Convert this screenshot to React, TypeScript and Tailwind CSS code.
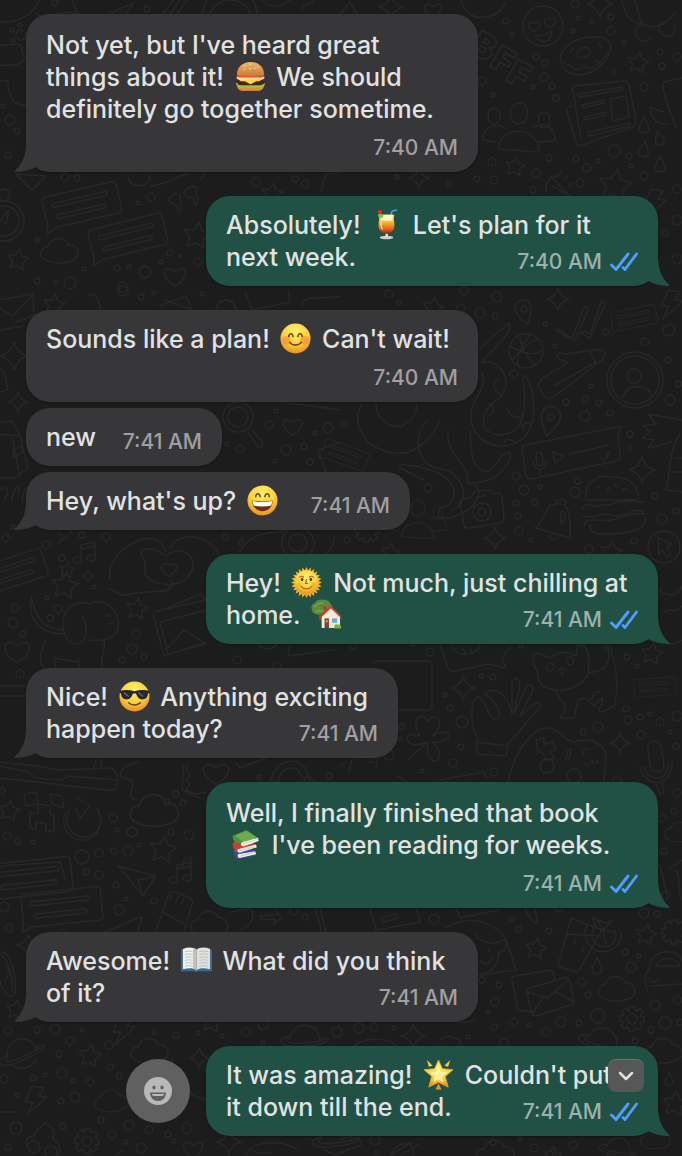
import type { ReactNode } from "react";

/* ---------- wallpaper ---------- */

const CIRCLES: [number, number, number][] = [
  [55, 3, 3], [147, 9, 3], [10, 120, 5], [17, 131, 3], [3, 106, 2], [8, 155, 3], [65, 177, 4], [77, 178, 3], [138, 203, 2], [151, 197, 4],
  [37, 240, 2], [170, 253, 3], [180, 256, 1], [161, 262, 2], [198, 262, 4], [145, 272, 6], [117, 268, 3], [129, 267, 2], [84, 269, 2],
  [37, 281, 3], [56, 282, 2], [70, 283, 6], [123, 287, 5], [256, 182, 4], [295, 179, 3], [305, 184, 4], [12, 30, 2], [21, 35, 5], [13, 40, 2], [20, 25, 2],
  [506, 21, 3], [512, 35, 2], [575, 4, 4], [578, 18, 2], [592, 22, 2], [611, 17, 3], [611, 31, 4], [573, 31, 2], [536, 57, 3], [545, 63, 3],
  [544, 77, 4], [533, 87, 2], [552, 86, 3], [556, 98, 3], [482, 81, 4], [493, 95, 2], [624, 43, 2], [614, 72, 2], [660, 52, 3], [662, 66, 3],
  [677, 57, 4], [644, 87, 4], [614, 151, 6], [629, 156, 3], [631, 166, 2], [644, 176, 4], [549, 158, 3], [492, 162, 4], [576, 159, 3],
  [587, 168, 4], [598, 161, 2], [536, 173, 4], [533, 190, 3], [580, 183, 4], [477, 179, 3], [494, 180, 4], [449, 184, 2], [397, 177, 2],
  [677, 189, 4], [677, 220, 5], [665, 233, 3], [677, 259, 5], [141, 297, 3], [154, 293, 2], [202, 294, 2], [123, 291, 5],
  [389, 294, 4], [399, 303, 2], [480, 313, 5], [495, 316, 3], [497, 297, 5], [461, 308, 4], [464, 291, 4], [545, 324, 2], [555, 346, 2], [606, 332, 3],
  [645, 342, 4], [669, 330, 6], [514, 374, 4], [591, 386, 2], [566, 402, 3], [585, 399, 3], [599, 403, 3], [610, 413, 3], [585, 416, 5], [668, 360, 3],
  [670, 400, 5], [679, 384, 3], [630, 434, 3], [630, 448, 2], [516, 476, 4], [524, 490, 5], [540, 487, 2], [575, 492, 5], [578, 481, 3], [428, 488, 4],
  [655, 496, 3], [662, 519, 5], [676, 511, 3], [516, 503, 3], [535, 502, 3], [518, 516, 3], [519, 531, 4], [531, 540, 2], [634, 541, 3], [589, 549, 4],
  [347, 540, 3], [344, 424, 2], [276, 411, 2], [269, 425, 4], [328, 428, 5], [315, 433, 2], [286, 450, 5], [304, 446, 3], [227, 444, 2],
  [240, 449, 4], [275, 461, 2], [310, 462, 3], [6, 538, 4], [13, 527, 2], [46, 545, 4], [62, 558, 3], [82, 535, 3], [106, 537, 4], [225, 537, 3],
  [88, 576, 4], [15, 608, 4], [13, 623, 5], [23, 634, 3], [20, 674, 4], [94, 587, 2], [47, 598, 2], [58, 609, 4], [50, 618, 3], [136, 634, 4],
  [132, 649, 5], [144, 657, 3], [122, 660, 3], [237, 660, 4], [277, 666, 4], [353, 646, 3], [413, 644, 2], [430, 652, 4], [521, 646, 2], [481, 676, 2], [493, 677, 3],
  [445, 695, 2], [450, 708, 3], [462, 722, 6], [402, 727, 3], [400, 739, 2], [461, 747, 3], [453, 763, 4], [389, 755, 5], [422, 771, 2], [494, 772, 4],
  [627, 657, 3], [637, 666, 2], [626, 709, 3], [628, 720, 4], [640, 717, 3], [650, 714, 2], [660, 722, 4], [677, 716, 5], [598, 727, 5], [583, 732, 3],
  [641, 735, 4], [670, 732, 2], [676, 746, 3], [617, 780, 4], [677, 793, 4], [674, 811, 3], [662, 818, 4], [664, 851, 3], [2, 791, 3], [7, 836, 4],
  [18, 841, 3], [33, 842, 2], [113, 818, 4], [117, 830, 2], [132, 832, 5], [82, 857, 7], [99, 853, 4], [114, 851, 3], [128, 851, 5],
  [139, 845, 2], [171, 832, 3], [189, 835, 5], [167, 802, 3], [176, 794, 3], [183, 803, 3], [259, 777, 2], [307, 780, 3], [329, 776, 3],
  [99, 875, 4], [86, 872, 3], [116, 885, 3], [126, 899, 2], [154, 901, 3], [119, 910, 5], [4, 907, 5], [9, 928, 4], [62, 933, 4], [294, 911, 4], [305, 917, 3],
  [434, 919, 5], [512, 919, 2], [519, 929, 3], [549, 931, 3], [559, 908, 4], [644, 913, 5], [657, 914, 3], [666, 895, 4], [482, 980, 3], [499, 985, 3], [495, 1002, 4],
  [488, 1012, 2], [494, 1027, 3], [514, 1022, 4], [529, 1025, 2], [546, 1032, 4], [561, 1022, 5], [579, 1023, 3], [598, 1016, 7], [582, 982, 4], [588, 995, 3],
  [625, 952, 3], [639, 956, 2], [631, 967, 5], [655, 1005, 5], [665, 1023, 6], [651, 1030, 3], [678, 1000, 4], [680, 1022, 3], [635, 1041, 3],
  [8, 1031, 4], [37, 1030, 3], [55, 1029, 5], [82, 1030, 2], [70, 1041, 4], [109, 1045, 4], [59, 1054, 3], [4, 1079, 4], [33, 1078, 3], [45, 1075, 2], [62, 1073, 5],
  [17, 1095, 2], [75, 1097, 5], [61, 1101, 3], [73, 1081, 2], [90, 1082, 4], [110, 1067, 3], [119, 1076, 3], [16, 1128, 6], [8, 1147, 3], [63, 1126, 3],
  [101, 1120, 3], [112, 1135, 4], [129, 1125, 5], [126, 1142, 2], [141, 1148, 5], [149, 1130, 4], [168, 1134, 3], [174, 1141, 2], [187, 1128, 5],
  [154, 1032, 2], [176, 1035, 3], [198, 1033, 2], [222, 1036, 2], [246, 1032, 4], [263, 1025, 5], [263, 1043, 2], [337, 1032, 5], [359, 1028, 5], [374, 1027, 4], [394, 1028, 2],
  [468, 1037, 2], [504, 1043, 4], [375, 1140, 5], [493, 1142, 3], [520, 1139, 2], [534, 1148, 4], [550, 1154, 3], [573, 1145, 4], [377, 1152, 2],
];

const STARS: [number, number, number][] = [
  [18, 260, 11], [197, 236, 14], [272, 194, 11], [638, 63, 11], [515, 167, 10], [615, 186, 17], [54, 305, 11], [433, 308, 11], [65, 586, 14], [137, 609, 11],
  [9, 811, 11], [163, 850, 14], [652, 654, 11], [611, 552, 11], [390, 553, 10], [90, 1056, 12], [212, 1022, 11], [536, 949, 11], [646, 935, 11],
  [16, 1010, 10], [675, 1104, 13], [552, 1156, 10], [67, 570, 8],
];

const SPARKLES: [number, number, number][] = [
  [391, 7, 12], [600, 4, 13], [419, 178, 10], [14, 356, 14], [18, 402, 10], [558, 299, 11], [642, 470, 13], [495, 538, 11], [463, 688, 12],
  [620, 743, 10], [413, 1036, 12], [199, 1058, 10], [229, 1142, 12], [28, 945, 11], [138, 1085, 8],
];

const HEARTS: [number, number, number][] = [
  [175, 276, 11], [433, 10, 9], [534, 26, 6], [550, 22, 6], [293, 426, 10], [17, 651, 13], [216, 773, 13], [169, 569, 8], [193, 1149, 10],
];

const LETTERS: [string, number, number][] = [["B", 484, 46], ["F", 503, 60], ["F", 519, 74]];

function starPath(cx: number, cy: number, r: number) {
  const points: string[] = [];
  for (let i = 0; i < 10; i++) {
    const radius = i % 2 === 0 ? r : r * 0.5;
    const angle = (Math.PI / 5) * i - Math.PI / 2 + 0.15;
    points.push(`${(cx + radius * Math.cos(angle)).toFixed(1)} ${(cy + radius * Math.sin(angle)).toFixed(1)}`);
  }
  return `M${points.join("L")}Z`;
}

function sparklePath(x: number, y: number, r: number) {
  const k = r * 0.2;
  return `M${x} ${y - r}Q${x + k} ${y - k} ${x + r} ${y}Q${x + k} ${y + k} ${x} ${y + r}Q${x - k} ${y + k} ${x - r} ${y}Q${x - k} ${y - k} ${x} ${y - r}Z`;
}

function heartPath(x: number, y: number, s: number) {
  return `M${x} ${y + s * 0.9}C${x - s * 1.6} ${y} ${x - s * 0.9} ${y - s * 1.2} ${x} ${y - s * 0.4}C${x + s * 0.9} ${y - s * 1.2} ${x + s * 1.6} ${y} ${x} ${y + s * 0.9}Z`;
}

const cloud = "M-14 8C-22 6-20-6-12-5C-10-16 6-16 8-7C18-9 22 5 13 8C6 12-8 12-14 8Z";
const gear = "M-3-12H3L4-8L8-10L11-6L8-3L12-2V3L8 4L10 8L6 11L3 8L2 12H-3L-4 8L-8 10L-11 6L-8 3L-12 2V-3L-8-4L-10-8L-6-11L-3-8Z";
const drop = "M0-8C2-3 5 0 5 4C5 9-5 9-5 4C-5 0-2-3 0-8Z";
const bolt = "M-4-14L8-12L3-4L11-3L-9 15L-3 2L-11 2Z";
const pin = "M0 13C-4 6-8 2-8-4C-8-15 8-15 8-4C8 2 4 6 0 13Z";
const note = "M-6 8V-7L8-10V5M-6-3L8-6M-6 8A4 3 0 1 1-9 5M8 5A4 3 0 1 1 5 3";
const people = "M-20 22C-20-2 20-2 20 25ZM-23 15L-36 13C-36-2-22-4-14 1M20 15L36 14C36-2 24-5 16 0M0-24C12-24 11-3 0-3C-11-3-12-24 0-24ZM-25-19C-16-19-17-3-25-3C-33-3-33-19-25-19ZM25-15C33-15 33 1 25 1C17 1 17-15 25-15Z";
const bubble = "M-38-12Q-38-16-34-16H34Q38-16 38-12V12Q38 16 34 16H-30L-40 20L-38 10ZM-28-8H26Q29-6 26-4H-28Q-31-6-28-8ZM-26 4H22Q25 6 22 8H-26Q-29 6-26 4Z";
const planet = "M-15 0A15 15 0 0 1 15 0M-12 8A15 15 0 0 0 13 7M-15-2C-32 4-22 12 0 6C24 2 30-8 15-3M-16 1C-22 6-8 5 0 3C14 0 22-4 15-1";

const PLACED: { d: string; x: number; y: number; rot?: number; s?: number }[] = [
  { d: bubble, x: 82, y: 205, rot: -13 }, { d: bubble, x: 128, y: 237, rot: -14 }, { d: bubble, x: 634, y: 318, rot: -11, s: 0.6 },
  { d: bubble, x: 12, y: 572, rot: -18, s: 0.9 }, { d: bubble, x: 655, y: 687, rot: -4, s: 0.55 }, { d: bubble, x: 30, y: 878, rot: -6, s: 1.1 },
  { d: bubble, x: 62, y: 907, rot: -6, s: 1.05 }, { d: bubble, x: 345, y: 455, rot: 20, s: 0.6 },
  { d: cloud, x: 60, y: 252 }, { d: cloud, x: 210, y: 925 }, { d: cloud, x: 150, y: 1052 }, { d: cloud, x: 112, y: 1102, s: 0.9 }, { d: cloud, x: 617, y: 990 },
  { d: cloud, x: 664, y: 1052 }, { d: cloud, x: 496, y: 1154 }, { d: cloud, x: 656, y: 1140, s: 0.8 }, { d: cloud, x: 155, y: 812, s: 1.3 }, { d: cloud, x: 680, y: 833, s: 0.8 },
  { d: gear, x: 87, y: 1141 }, { d: gear, x: 632, y: 1019 }, { d: gear, x: 674, y: 932 }, { d: gear, x: 367, y: 530 },
  { d: drop, x: 644, y: 125 }, { d: drop, x: 659, y: 138, rot: -15, s: 0.9 }, { d: drop, x: 644, y: 149, rot: 10 }, { d: drop, x: 660, y: 164 }, { d: drop, x: 597, y: 966 }, { d: drop, x: 669, y: 1079, s: 0.8 },
  { d: bolt, x: 655, y: 203 }, { d: bolt, x: 672, y: 304 }, { d: bolt, x: 124, y: 1030 }, { d: bolt, x: 36, y: 1100 }, { d: bolt, x: 65, y: 533, s: 0.7 },
  { d: pin, x: 524, y: 312, rot: -15 }, { d: pin, x: 550, y: 421, rot: 12, s: 1.2 },
  { d: note, x: 87, y: 552 }, { d: note, x: 183, y: 872 }, { d: note, x: 187, y: 862, s: 0.6 },
  { d: people, x: 519, y: 127 }, { d: people, x: 418, y: 519, s: 0.8 },
  { d: planet, x: 22, y: 1054, rot: -12 }, { d: planet, x: 305, y: 1040, rot: 8 }, { d: planet, x: 602, y: 1043, rot: 25 }, { d: planet, x: 618, y: 1150, rot: 20, s: 0.8 }, { d: planet, x: 336, y: 1140, rot: 5 },
];

const DRAWINGS = [
  "M0 22C20 23 34 14 39 0M36 14C46 22 60 8 78 14L72 0M0 45C10 46 14 42 20 45C26 50 18 52 24 55C26 64 16 66 0 65M0 81H8C8 98 14 106 26 105",
  "M110 13L134 3L126 14M163 14L173 0M170 14L180 0M177 14L187 0M203 14A27 27 0 0 1 257 14M210 14A22 22 0 0 1 251 14M262 0C268 8 280 8 290 0M302 10C304 2 310 6 314 0M340 14L350 2L357 14",
  "M16 174L46 176L32 190ZM128 176C130 190 150 188 150 176M150 186C170 184 178 174 190 174M200 180L206 172M321 192L326 174L341 172",
  "M180 200C184 192 172 192 169 199C169 205 176 204 177 206C179 210 176 212 180 212C182 208 182 204 180 200M196 192C200 184 188 186 184 192C184 199 192 196 193 198C195 202 192 205 196 206C198 201 198 196 196 192",
  "M24 221A20 20 0 0 1-16 221A20 20 0 0 1 24 221M19 221A15 15 0 0 1-11 221A15 15 0 0 1 19 221M0 220L9 210L6 224ZM10 195A6 6 0 0 1-2 195A6 6 0 0 1 10 195",
  "M461 0C465 15 475 20 490 16C500 13 503 8 505 2M563 26A20 20 0 0 1 523 26A20 20 0 0 1 563 26M536 36C542 36 548 34 552 31C552 44 538 44 536 36Z",
  "M560 60C560 44 580 36 598 37C616 38 612 54 602 64C590 78 566 80 560 60M562 60C566 68 570 62 574 69C580 72 582 64 590 68C598 68 602 58 609 52M577 54C578 46 592 46 590 52C588 60 576 58 577 54M570 52L574 48M598 44L602 48M594 62L598 60",
  "M572 90Q571 87 575 86L624 81Q628 81 629 85L636 120Q636 127 630 128L583 145Q578 147 576 142L567 112Q566 106 573 106M573 90L581 140M578 94L622 87L623 90L579 97ZM582 105L604 100V103L583 108ZM584 117L606 112V115L585 120ZM588 132L630 123V126L589 136ZM610 99L626 96L629 117L613 121Z",
  "M682 78L664 82C660 86 670 112 676 128M664 112L650 107C652 122 660 126 670 124M635 0L641 22C650 30 664 28 676 12M644 25A8 8 0 1 0 650 38M662 22A8 8 0 1 0 674 24M622 0C626 16 630 22 641 24",
  "M546 192C544 184 550 176 558 176M552 186L578 200M558 176L562 172M564 180L568 177M568 186L572 183M546 195L551 200M550 176L572 198",
  "M0 300L33 294L34 316L16 322M0 308L12 316L32 296M0 330L24 326M32 308L36 318M88 296C94 290 100 300 100 310M160 306L186 296L192 310M164 300L192 310M216 310A10 10 0 0 1 236 310M245 292L252 310L290 302L288 290M302 306C302 294 320 300 341 296",
  "M0 368L4 372L8 390L0 392M0 422L12 421L20 436L28 468L14 478H0M0 434L20 436M13 450L22 446L23 452L14 457ZM12 436L20 477M0 490C8 484 10 490 4 500M12 502C12 486 22 482 18 496M22 502C24 484 32 484 26 496",
  "M253 417A15 15 0 0 1 223 417A15 15 0 0 1 253 417M248 417A10 10 0 0 1 228 417A10 10 0 0 1 248 417M248 432L257 446Q264 450 262 441L252 430M281 402L341 410M318 450L341 442M318 450L326 472",
  "M110 580C106 560 128 540 150 538C158 538 162 544 166 552M170 548C180 532 206 532 220 556M145 560C134 552 146 542 166 556C184 542 200 560 190 574C180 590 152 586 145 574ZM240 552C252 530 272 534 286 530M314 543A16 16 0 0 1 282 543A16 16 0 0 1 314 543M307 543A9 9 0 0 1 289 543A9 9 0 0 1 307 543M244 538C232 544 246 552 242 538M314 560C326 556 334 548 334 536",
  "M543 351A17 17 0 0 1 509 351A17 17 0 0 1 543 351M510 346C524 354 534 356 543 350M512 360C526 344 534 340 538 339M520 335C520 348 528 360 536 365M530 335C522 344 516 356 518 366",
  "M556 330Q560 328 564 334L572 338L584 308Q588 304 588 310L574 342ZM581 333Q585 329 590 334L601 302Q606 300 604 306L590 338Z",
  "M538 386C536 378 560 370 568 362C554 360 554 350 566 354L594 350C604 348 608 352 602 360L552 398Q546 402 538 386M554 386L596 362M590 352L596 364",
  "M663 380A28 28 0 0 1 607 380A28 28 0 0 1 663 380M659 380A24 24 0 0 1 611 380A24 24 0 0 1 659 380M641 376A7 7 0 0 1 627 376A7 7 0 0 1 641 376M622 398C628 382 648 384 652 396M554 417A3 3 0 0 1 548 417A3 3 0 0 1 554 417M527 309A3 3 0 0 1 521 309A3 3 0 0 1 527 309",
  "M522 450Q521 446 525 445L612 428L621 427L618 436L620 456Q620 460 616 461L531 479Q527 479 526 476ZM536 454Q540 450 542 454L543 464Q540 468 537 464ZM533 462C534 472 546 472 546 460M540 470V474M553 452L564 456L555 463ZM569 454L609 445M601 458L604 461L608 452M606 458L610 452",
  "M480 348L508 324C512 322 510 330 504 338L482 362C500 360 510 376 504 392C496 404 480 408 484 426C488 434 500 438 512 432C524 426 526 408 524 384C520 372 528 372 532 392C538 424 528 446 500 446C476 444 468 424 472 408C478 392 486 388 482 372M488 404C496 404 494 418 488 414M498 380C490 382 496 396 502 394M504 444C504 438 514 438 514 444M524 430C520 426 526 420 530 424M506 408C512 420 524 420 524 408",
  "M362 404C352 420 360 442 382 450C408 460 428 446 440 420M376 404C376 416 386 428 402 426C414 420 418 410 416 404M428 420C412 434 416 462 436 468L446 470C466 478 470 504 452 510M448 430C446 460 470 460 468 484C480 480 484 500 468 510C452 520 432 522 440 508C464 504 456 476 430 470C418 466 396 462 400 468L424 480M470 430C472 448 468 466 486 472C500 466 496 456 510 452C512 462 500 478 482 482C476 482 472 482 468 484",
  "M586 500C584 480 600 474 612 477C630 476 640 488 638 500ZM582 508C590 498 594 512 602 504C610 508 616 500 624 502C632 498 636 504 644 502M583 516C596 520 602 510 614 516C626 518 632 506 644 512M584 526C584 516 600 522 612 520C624 518 630 512 648 514M590 524C590 536 600 534 616 534C632 532 646 530 645 518M597 488L600 486M606 492L609 488M614 484L617 488M622 490L626 488",
  "M460 504Q459 500 463 499L471 497L475 491L489 490L493 494L498 493Q501 493 502 497L504 518Q504 522 500 523L470 528Q465 529 464 525ZM491 512A9 9 0 0 1 473 512A9 9 0 0 1 491 512M486 512A4 4 0 0 1 478 512A4 4 0 0 1 486 512M475 498L486 495",
  "M535 528C548 520 542 506 556 504C570 502 570 514 570 538ZM548 535C550 542 558 540 558 537M556 504A5 5 0 1 1 566 504M561 512Q566 510 565 518L562 524Q560 522 561 512Z",
  "M680 547A16 16 0 0 1 648 547A16 16 0 0 1 680 547M658 538L672 544L667 547L671 554L667 557L662 550L659 554ZM682 420L648 414L656 424L643 426L650 432L642 438L654 440L648 448L672 442M680 434C668 450 670 480 666 490L682 492M674 458H682M672 472H682",
  "M32 596C26 618 40 634 64 634M32 600C36 620 46 630 64 630M64 616C68 604 80 600 90 604C106 596 120 612 118 628C116 638 104 642 88 640M64 616C60 632 68 644 78 644C90 640 86 622 82 616M106 616H110M108 624L114 622M46 640C40 654 38 662 44 668M104 640C106 650 100 658 102 668M54 658L56 668M78 658L80 668M54 658L78 662",
  "M108 588C118 592 120 598 130 594C150 590 166 594 170 586M170 580C176 586 170 592 160 592M154 618Q152 612 158 611L206 600M154 618L164 656L206 642M160 622L206 610M160 622L168 654L206 644M166 650L184 630L206 644M158 612L200 594L206 600M290 644L288 656L334 650M258 642C260 652 276 650 278 642",
  "M0 686H26M0 696H26M0 762L36 766L60 770L112 768L118 776L116 788Q112 792 106 790L0 778M0 766L28 772L36 778L62 780L68 776L118 780M96 760L94 768M102 758L101 768",
  "M24 794L36 792L38 804L26 806ZM50 794L62 796L64 808L52 804ZM38 804L50 806V814L54 816V832L46 830V824L36 822V830L30 828V812L38 814Z",
  "M78 798L90 806L80 818L76 808M70 810A17 17 0 1 0 96 808M66 812A19 19 0 0 0 85 840A19 19 0 0 0 97 810",
  "M138 762C120 766 112 778 132 780C136 788 124 798 136 800M184 764L182 790L200 798M188 764L186 770L190 774L186 780L190 784L186 790L196 794L206 792M236 762L240 768L266 758M270 784C274 756 304 754 308 776L316 782M278 782C280 764 300 764 302 778M340 766L346 762",
  "M374 664Q374 661 378 661L428 661Q432 661 432 665V706Q432 710 428 710H398M440 645L448 668Q450 672 456 671L488 664L506 668L502 658L510 646M452 646C456 658 476 656 480 646M462 648L466 654M470 648L472 654",
  "M538 674C530 658 532 652 540 654L550 658C560 650 568 652 576 656L578 645L584 646C592 656 588 668 588 674C582 688 560 694 548 688C540 686 538 680 538 674M588 672C604 674 612 662 608 648M606 650C600 644 612 642 612 654C620 680 616 700 614 706L602 712C594 710 606 704 602 698L594 706L588 700C598 698 590 690 600 692M556 692C564 708 568 702 564 712L560 718H574L578 700L586 698M554 667A4 4 0 0 1 546 667A4 4 0 0 1 554 667M574 661A4 4 0 0 1 566 661A4 4 0 0 1 574 661M558 670L562 668L566 670M562 672V676",
  "M427 742C402 752 402 728 420 736C408 714 426 712 428 722C434 710 448 722 432 736C452 724 456 744 432 742C444 752 440 764 432 760C426 756 428 748 427 742L408 760",
  "M478 740C466 716 474 688 482 700C488 706 490 724 498 718C504 712 490 696 484 694C496 684 508 696 512 714L512 682C516 674 522 680 518 694L514 714L526 688C532 680 536 688 528 700L520 716L534 704C544 700 540 708 532 716L508 744M476 742L508 746L506 756L478 754Z",
  "M508 782C512 758 530 728 548 728C560 728 564 742 574 742C590 736 604 744 606 756L604 782M536 740L544 738V744L552 742L556 748L550 752L554 758L546 760L542 752L538 752ZM566 760L568 750L571 749L569 760ZM554 766A7 7 0 0 1 540 766A7 7 0 0 1 554 766M581 776A7 7 0 0 1 567 776A7 7 0 0 1 581 776M590 762A3 3 0 0 1 584 762M598 760A3 3 0 0 1 592 760M584 754A3 3 0 0 1 590 750",
  "M648 750C646 740 658 738 661 746L664 764C664 774 652 774 650 766ZM640 766C644 790 674 788 672 760M644 766C648 784 670 782 668 762M656 784L660 794L664 792L662 780M349 773L352 758H378L376 768M368 762H374M398 776L406 782M440 780L484 772L486 778",
  "M118 866L156 876L143 896ZM156 876L138 880L143 896M105 932L138 918L142 917L138 932M156 930L168 896Q170 890 176 892L190 898Q194 900 192 904L184 932M163 912L184 924M172 894L170 900M178 896L176 902M184 898L182 904M232 912C240 908 246 912 250 908C256 914 252 926 240 930M260 916L278 914L276 910L281 918L274 924L275 919L262 920ZM315 908L322 932M320 908L326 932M0 866L60 862L66 880",
  "M0 952C12 950 18 984 14 996C8 998 0 988 0 980M0 955C8 958 14 980 12 990M4 966C10 966 10 978 4 980",
  "M370 908L376 930L420 922L416 906M381 918L396 914L398 918L384 922ZM456 908L460 918L498 910M524 906C536 934 540 922 534 908M446 928A40 36 0 0 1 508 944L516 970L500 972L480 976M476 934C480 944 496 946 502 940C510 940 506 954 498 952C500 968 488 974 478 974M489 950V952M480 960C484 966 490 964 492 958",
  "M571 918L558 966Q560 968 578 972L602 930ZM566 934L600 936M597 928L592 918L610 924M621 931A18 18 0 1 1 588 924M615 930A12 12 0 1 1 596 926M603 930L596 918M603 930L612 920M603 930L616 932M603 930L606 944M576 940A2 2 0 0 0 576 944M584 948A2 2 0 0 0 584 952",
  "M512 980Q511 976 515 976L550 970Q554 971 554 976L555 980M512 980L518 1010L532 1012M527 992Q526 988 530 988L564 978Q568 977 570 981L574 1004L536 1016Q532 1016 531 1012ZM527 992L548 998L568 980M532 1014L542 998M574 1002L556 992",
  "M647 990C642 974 648 972 650 966C652 948 678 948 682 960M656 966C658 956 676 956 680 966ZM650 986L682 984M658 978A4 4 0 0 1 650 978M445 1018A30 22 0 0 0 476 1020M440 1040C450 1030 470 1044 456 1048M355 1046C360 1038 390 1036 396 1046",
  "M30 1150C22 1142 28 1136 34 1136C34 1128 44 1128 44 1122C52 1126 58 1134 52 1138C62 1144 62 1154 54 1156M40 1147A6 6 0 0 1 28 1147A6 6 0 0 1 40 1147M57 1152A6 6 0 0 1 45 1152A6 6 0 0 1 57 1152M92 1141A5 5 0 0 1 82 1141A5 5 0 0 1 92 1141M637 1019A5 5 0 0 1 627 1019A5 5 0 0 1 637 1019M0 1112H18M172 1058C176 1090 200 1104 214 1098M246 1154C252 1142 280 1138 298 1150M252 1150C262 1158 264 1148 272 1154M115 1156L122 1150M390 1154C404 1134 420 1148 412 1156M340 1140C350 1134 364 1138 360 1146L341 1152",
  "M392 1154L412 1142M400 1156L418 1144M660 866L668 898M676 870C682 880 676 890 682 900M660 590C670 600 682 592 682 586M664 612C672 606 672 616 682 606M660 640C668 646 676 644 682 640M668 870L682 860",
];

function Wallpaper() {
  return (
    <svg
      aria-hidden="true"
      className="pointer-events-none absolute inset-0 h-full w-full"
      viewBox="0 0 682 1156"
      preserveAspectRatio="xMidYMin slice"
      fill="none"
      stroke="#272728"
      strokeWidth="1.5"
      strokeLinejoin="round"
      strokeLinecap="round"
    >
      {CIRCLES.map(([x, y, r], i) => <circle key={i} cx={x} cy={y} r={r} />)}
      {STARS.map(([x, y, r], i) => <path key={i} d={starPath(x, y, r)} />)}
      {SPARKLES.map(([x, y, r], i) => <path key={i} d={sparklePath(x, y, r)} />)}
      {HEARTS.map(([x, y, s], i) => <path key={i} d={heartPath(x, y, s)} />)}
      {PLACED.map((p, i) => (
        <path key={i} d={p.d} transform={`translate(${p.x} ${p.y}) rotate(${p.rot ?? 0}) scale(${p.s ?? 1})`} />
      ))}
      {DRAWINGS.map((d, i) => <path key={i} d={d} />)}
      {LETTERS.map(([letter, x, y], i) => (
        <text key={i} textAnchor="middle" className="text-[34px] font-black" transform={`translate(${x} ${y}) rotate(30) translate(0 12)`}>
          {letter}
        </text>
      ))}
    </svg>
  );
}

/* ---------- emoji ---------- */

function Emoji({ label, id, children }: { label: string; id?: string; children: ReactNode }) {
  return (
    <svg role="img" aria-label={label} viewBox="0 0 32 32" className="mr-1 mb-0.5 ml-1 size-[31px] shrink-0">
      {id && (
        <defs>
          <radialGradient id={id} cx="50%" cy="28%" r="75%">
            <stop offset="0" stopColor="#fff06c" />
            <stop offset="0.55" stopColor="#fbd13f" />
            <stop offset="1" stopColor="#e58a1c" />
          </radialGradient>
        </defs>
      )}
      {children}
    </svg>
  );
}

const Burger = () => (
  <Emoji label="🍔">
    <defs>
      <linearGradient id="bun" x1="0" y1="0" x2="0" y2="1">
        <stop offset="0" stopColor="#f0b56c" />
        <stop offset="1" stopColor="#cb7a34" />
      </linearGradient>
    </defs>
    <path d="M2 24h28c0 5-3 7-7 7H9c-4 0-7-2-7-7z" fill="url(#bun)" />
    <path d="M1 23c3-2 5 1 8 0s5 2 8 1 5 1 7 0 4 1 7-1c0 4-3 3-5 4s-4-1-6 0-4 1-7 0-4 1-6 0-6 0-6-4z" fill="#8cc63e" />
    <path d="M2 20c0-2 2-2 3-2h22c2 0 3 1 3 3s-1 4-4 4H6c-3 0-4-2-4-5z" fill="#4b2415" />
    <path d="M2 18h28l-5 3-3 0-6 3-6-3-4 0z" fill="#ffd447" />
    <path d="M2 16h28c1 2 0 3-3 3H5c-3 0-4-1-3-3z" fill="#f4dfa0" />
    <path d="M2 14h28c1 2 0 3-3 3H5c-3 0-4-1-3-3z" fill="#e5502e" />
    <path d="M2 14C2 6 8 1 16 1s14 5 14 13c0 2-28 2-28 0z" fill="url(#bun)" />
    <path d="M10 5l1-.6M15 3l1 .5M20 8l.7-.8M23 6l1 .8M9 9l1-.5M15 8h1" stroke="#fbe2ae" strokeWidth="1" strokeLinecap="round" />
  </Emoji>
);

const Drink = () => (
  <Emoji label="🍹">
    <defs>
      <linearGradient id="drink" x1="0" y1="0" x2="0" y2="1">
        <stop offset="0" stopColor="#fff0a0" />
        <stop offset="0.4" stopColor="#f9b832" />
        <stop offset="0.75" stopColor="#e4601f" />
        <stop offset="1" stopColor="#8f2a1c" />
      </linearGradient>
    </defs>
    <path d="M19 9l3-7 5-1" fill="none" stroke="#4a9fd8" strokeWidth="1.5" />
    <ellipse cx="16" cy="29.500" rx="7" ry="1.800" fill="#c9d0cf" />
    <path d="M15 25h2.500v4H15z" fill="#dfe4e0" />
    <path d="M8 6h16c-1.500 5 1 8 0 13-1 4-4 6.500-8 6.500S9 23 8 19c-1-5 1.500-8 0-13z" fill="url(#drink)" />
    <path d="M9 6h14c-1 2-1 3-1 6H10c0-3 0-4-1-6z" fill="#fff4c8" />
    <path d="M7 7c1-3 4-3 6 0-1 3-4 3-6 0z" fill="#8dbb3b" />
    <circle cx="9" cy="3" r="2.200" fill="#cf3425" />
    <path d="M11 12c-1 4-1 7 1 9" stroke="#ffe49a" strokeWidth="1.200" fill="none" />
  </Emoji>
);

const Blush = () => (
  <Emoji label="😊" id="blush">
    <circle cx="16" cy="16" r="15.500" fill="url(#blush)" />
    <circle cx="6.500" cy="18" r="4.500" fill="#f68a3c" opacity=".65" />
    <circle cx="25.500" cy="18" r="4.500" fill="#f68a3c" opacity=".65" />
    <path d="M9 14c.5-4 4-4 4.500 0M18.500 14c.5-4 4-4 4.500 0M10 20c3 3.800 9 3.800 12 0" fill="none" stroke="#71431e" strokeWidth="1.600" strokeLinecap="round" />
  </Emoji>
);

const Grin = () => (
  <Emoji label="😄" id="grin">
    <circle cx="16" cy="16" r="15.500" fill="url(#grin)" />
    <path d="M9 12c.5-4 4-4 4.500 0M18.500 12c.5-4 4-4 4.500 0" fill="none" stroke="#71431e" strokeWidth="1.600" strokeLinecap="round" />
    <path d="M5.500 16c7 1.500 14 1.500 21 0 0 7-4.500 11-10.500 11S5.500 23 5.500 16z" fill="#6b3014" />
    <path d="M6 16.500c7 1.500 13 1.500 20 0 0 2-.5 4-1.500 5-5 1-12 1-17 0-1-1-1.500-3-1.500-5z" fill="#fff" />
  </Emoji>
);

const Sun = () => (
  <Emoji label="🌞" id="sun">
    <path
      d={Array.from({ length: 48 }, (_, i) => {
        const r = i % 2 ? 12.5 : 16;
        const a = (i * Math.PI) / 24;
        return `${i ? "L" : "M"}${(16 + r * Math.cos(a)).toFixed(2)} ${(16 + r * Math.sin(a)).toFixed(2)}`;
      }).join("") + "Z"}
      fill="#f5b52f"
    />
    <circle cx="16" cy="16" r="12.500" fill="url(#sun)" />
    <ellipse cx="11.500" cy="13" rx="1.300" ry="1.800" fill="#5c3817" />
    <ellipse cx="20.500" cy="13" rx="1.300" ry="1.800" fill="#5c3817" />
    <path d="M9 10.500c1-1 3-1 4 0M19 10.500c1-1 3-1 4 0M16 13l-1 4h2M10.500 20c3 3.500 8 3.500 11 0" fill="none" stroke="#b36a1e" strokeWidth="1.300" strokeLinecap="round" />
    <circle cx="9" cy="18" r="2" fill="#f29a3a" opacity=".6" />
    <circle cx="23" cy="18" r="2" fill="#f29a3a" opacity=".6" />
  </Emoji>
);

const House = () => (
  <Emoji label="🏡">
    <path d="M8 13h3v9H8z" fill="#76502e" />
    <path d="M1 11C-1 7 2 5 4 4c2-3 6-4 8-3 4-1 7 1 8 4 3 2 2 6-1 7-2 3-5 3-7 3-4 2-10 1-11-4z" fill="#5b8a3f" />
    <path d="M4 8c3-3 6-4 9-4M5 12c4 1 8 0 10-2" stroke="#76a64c" strokeWidth="1.500" fill="none" />
    <path d="M13 7h3v6h-3z" fill="#b8402f" />
    <path d="M11 17.500L20.500 9 30 17.500V30H11z" fill="#f3ead9" />
    <path d="M8.500 18.500L20.500 6.500 32 18.500l-1.200 1L20.500 9.500 10 19.500z" fill="#c8402e" />
    <path d="M14 20h4.500v10H14z" fill="#80452c" />
    <path d="M21 19.500h6.500v5.500H21z" fill="#6aa8d8" stroke="#fff" strokeWidth=".8" />
    <circle cx="16.200" cy="23" r="1" fill="#d7c698" />
    <path d="M24 30.500c-1-4 2-5 3-4 3-1 5 2 4 4z" fill="#7bb142" />
  </Emoji>
);

const Cool = () => (
  <Emoji label="😎" id="cool">
    <circle cx="16" cy="16" r="15.500" fill="url(#cool)" />
    <path d="M1 10c5-1 10-1 15 .500 5-1.500 10-1.500 15-.500v2l-1 1c-1 5-3 6-6 6-4 0-5-3-6.500-6h-3c-1.500 3-2.500 6-6.500 6-3 0-5-1-6-6l-1-1z" fill="#25272a" />
    <path d="M5 12l5 4M20 12l5 4" stroke="#63676c" strokeWidth="1.500" />
    <path d="M10 22.500c3 3 8 3 12 0" fill="none" stroke="#71431e" strokeWidth="1.600" strokeLinecap="round" />
  </Emoji>
);

const Books = () => (
  <Emoji label="📚">
    <path d="M4 22l18-3 5 8-17 4c-5 1-6-6-6-9z" fill="#3d4b9c" />
    <path d="M8 26l18-3 1 3-17 4c-2 0-2-2-2-4z" fill="#f0eee7" />
    <path d="M3 14l16-4 9 8-18 6c-6 1-8-7-7-10z" fill="#cf3a32" />
    <path d="M8 21l19-5 .500 3L10 24.500c-2 0-3-2-2-3.500z" fill="#f2efe6" />
    <path d="M3 7L17 1l12 8-16 6C5 16 2 11 3 7z" fill="#4f9438" />
    <path d="M5 7l12-5 10 7-13 5z" fill="#6aac4f" />
    <path d="M12 14l17-5 .500 3.500L14 18c-3 0-3-2-2-4z" fill="#f5f3e9" />
    <path d="M13 15.500l16-5M10 22.500l16-4M10 28l16-4" stroke="#b8b6ae" strokeWidth=".6" />
  </Emoji>
);

const OpenBook = () => (
  <Emoji label="📖">
    <path d="M0 5l2-1h28l2 1v22H18c-1 1-3 1-4 0H0z" fill="#376a94" />
    <path d="M2 4c5-2 11-2 14 1v21c-4-3-9-2-14-1z" fill="#f2f1ed" />
    <path d="M30 4c-5-2-11-2-14 1v21c4-3 9-2 14-1z" fill="#e2e1de" />
    <path d="M13 4c2 0 3 1 3 1v21c-1-1-2-2-3-2zM16 5v21" fill="#c4c3c0" stroke="#aaa9a5" strokeWidth=".6" />
    <path d="M4 7c3-1 5-1 8 0M4 10c3-1 5-1 8 0M4 13c3-1 5-1 8 0M4 16c3-1 5-1 8 0M4 19c3-1 5-1 8 0M4 22c3-1 5-1 8 0M19 7c3-1 6-1 9 0M19 10c3-1 6-1 9 0M19 13c3-1 6-1 9 0M19 16c3-1 6-1 9 0M19 19c3-1 6-1 9 0M19 22c3-1 6-1 9 0" fill="none" stroke="#b4b5b4" strokeWidth=".8" />
  </Emoji>
);

const GlowingStar = () => (
  <Emoji label="🌟" id="glow">
    <path d="M4 1l6 6-4 1zM28 1l-6 6 4 1z" fill="#f6c944" />
    <path d="M16 1l4 9 11 1-8 7 3 11-10-5-10 5 3-11-8-7 11-1z" fill="url(#glow)" stroke="#efac2d" strokeWidth=".8" strokeLinejoin="round" />
    <path d="M16 25l3 6.500h-6z" fill="#e6952a" />
    <path d="M16 6l2 7 7 1-5 4 1 6-5-3-5 3 1-6-5-4 7-1z" fill="#fff9c0" opacity=".75" />
  </Emoji>
);

/* ---------- conversation ---------- */

type Message = {
  mine?: boolean;
  time: string;
  lines: ReactNode[];
  width: string;
  layout: "inline" | "stacked" | "short";
  tail?: boolean;
  active?: boolean;
};

const GROUPS: Message[][] = [
  [{
    time: "7:40 AM", width: "w-[452px]", layout: "stacked", tail: true,
    lines: ["Not yet, but I've heard great", <>things about it! <Burger /> We should</>, "definitely go together sometime."],
  }],
  [{ mine: true, time: "7:40 AM", width: "w-[452px]", layout: "inline", tail: true, lines: [<>Absolutely! <Drink /> Let's plan for it</>, "next week."] }],
  [
    { time: "7:40 AM", width: "w-[452px]", layout: "short", lines: [<>Sounds like a plan! <Blush /> Can't wait!</>] },
    { time: "7:41 AM", width: "w-[196px]", layout: "inline", lines: ["new"] },
    { time: "7:41 AM", width: "w-[384px]", layout: "inline", tail: true, lines: [<>Hey, what's up? <Grin /></>] },
  ],
  [{ mine: true, time: "7:41 AM", width: "w-[452px]", layout: "inline", tail: true, lines: [<>Hey! <Sun /> Not much, just chilling at</>, <>home. <House /></>] }],
  [{ time: "7:41 AM", width: "w-[372px]", layout: "inline", tail: true, lines: [<>Nice! <Cool /> Anything exciting</>, "happen today?"] }],
  [{ mine: true, time: "7:41 AM", width: "w-[452px]", layout: "stacked", tail: true, lines: ["Well, I finally finished that book", <><Books /> I've been reading for weeks.</>] }],
  [{ time: "7:41 AM", width: "w-[452px]", layout: "inline", tail: true, lines: [<>Awesome! <OpenBook /> What did you think</>, "of it?"] }],
  [{ mine: true, active: true, time: "7:41 AM", width: "w-[452px]", layout: "inline", tail: true, lines: [<>It was amazing! <GlowingStar /> Couldn't put</>, "it down till the end."] }],
];

const PADDING = { inline: "pt-[13px]", short: "pt-[13px]", stacked: "pt-[15px]" };
const META_OFFSET = { inline: "-mt-[23px]", short: "mt-[11px]", stacked: "mt-[11px]" };

function Ticks() {
  return (
    <svg role="img" aria-label="Read" viewBox="0 0 28 20" className="h-5 w-7" fill="none" stroke="#529dfb" strokeWidth="2.900" strokeLinecap="round" strokeLinejoin="round">
      <path d="M1.500 13l4.500 4.500L18 2M13 15.500l2 2L26.500 2" />
    </svg>
  );
}

function Tail({ mine }: { mine?: boolean }) {
  return (
    <svg
      aria-hidden="true"
      viewBox="0 0 34 30"
      className={mine ? "absolute -right-3 bottom-0 h-[30px] w-[34px] -scale-x-100" : "absolute -left-3 bottom-0 h-[30px] w-[34px]"}
      fill={mine ? "#215045" : "#373739"}
    >
      <path d="M12 0C12 14 8 22 1 28.500Q0 30 2 30C10 29.500 16 28 22 25L30 14Z" />
    </svg>
  );
}

function Bubble({ message }: { message: Message }) {
  const { mine, width, layout, lines, time, tail, active } = message;
  return (
    <article
      className={`relative max-w-full rounded-[24px] px-5 pb-3 shadow-[0_1px_2px_rgba(0,0,0,0.3)] ${mine ? "bg-[#215045]" : "bg-[#373739]"} ${width} ${PADDING[layout]}`}
    >
      {tail && <Tail mine={mine} />}
      <p className="relative text-[25px] leading-8 font-medium text-[#e1e2e2]">
        {lines.map((line, i) => (
          <span key={i} className="flex h-8 items-center whitespace-pre">{line}</span>
        ))}
      </p>
      <div className={`relative flex h-6 items-center justify-end gap-2 ${META_OFFSET[layout]}`}>
        <time className={`text-[21px] leading-6 font-medium ${mine ? "text-[#9cb1ab]" : "text-[#a0a0a1]"}`}>{time}</time>
        {mine && <Ticks />}
      </div>
      {active && (
        <button
          type="button"
          aria-label="Message options"
          className="absolute top-[13px] right-3.5 flex h-[33px] w-9 items-center justify-center rounded-lg bg-[#575757] shadow-[inset_0_1px_0_rgba(255,255,255,0.15)]"
        >
          <svg aria-hidden="true" viewBox="0 0 16 10" className="h-2.5 w-4" fill="none" stroke="#e0e0e0" strokeWidth="2.500" strokeLinecap="round" strokeLinejoin="round">
            <path d="M2 2l6 6 6-6" />
          </svg>
        </button>
      )}
    </article>
  );
}

function ReactButton() {
  return (
    <button type="button" aria-label="Add reaction" className="flex h-16 w-16 shrink-0 items-center justify-center rounded-full bg-[#606060]">
      <svg aria-hidden="true" viewBox="0 0 28 28" className="h-7 w-7">
        <circle cx="14" cy="14" r="14" fill="#b9b9b9" />
        <ellipse cx="10" cy="10.500" rx="1.600" ry="2" fill="#606060" />
        <ellipse cx="18" cy="10.500" rx="1.600" ry="2" fill="#606060" />
        <path d="M6 15.500h16c0 5-3.500 8.500-8 8.500s-8-3.500-8-8.500z" fill="#606060" />
        <path d="M8 17h12c0 1.300-.6 2-2 2h-8c-1.400 0-2-.7-2-2z" fill="#b9b9b9" />
      </svg>
    </button>
  );
}

export default function App() {
  return (
    <main className="relative min-h-screen overflow-hidden bg-[#1c1c1d] font-['Inter','Liberation_Sans',sans-serif]">
      <Wallpaper />
      <div className="relative flex flex-col gap-6 pt-3.5 pr-6 pb-5 pl-[26px]">
        {GROUPS.map((group, i) => (
          <section key={i} className="flex flex-col gap-1.5">
            {group.map((message, j) => (
              <div key={j} className={message.mine ? "flex items-center justify-end gap-4" : "flex"}>
                {message.active && <ReactButton />}
                <Bubble message={message} />
              </div>
            ))}
          </section>
        ))}
      </div>
    </main>
  );
}
